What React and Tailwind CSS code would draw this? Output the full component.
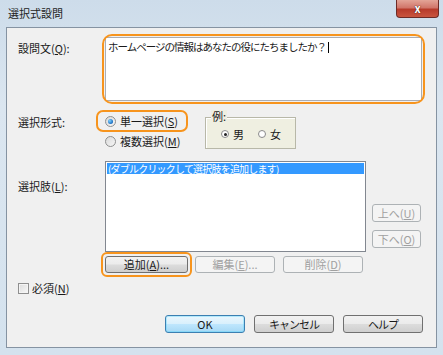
const FONT = "font-['Noto_Sans_CJK_JP','Liberation_Sans',sans-serif]"

const Btn = ({ children, className = '', variant = 'normal' }) => {
  const look = {
    normal: 'border-[#707070] bg-[linear-gradient(#f2f2f2_0%,#ebebeb_48%,#dcdcdc_52%,#cfcfcf_100%)] text-[#1a1a1a]',
    primary: 'border-[#3c7fb1] bg-[linear-gradient(#eaf6fd_0%,#d9f0fc_48%,#bee6fd_52%,#a7d9f5_100%)] text-[#1a1a1a] shadow-[inset_0_0_0_1px_#48d3fc55]',
    disabled: 'border-[#adb2b5] bg-[#f4f4f4] text-[#a0a0a0]',
  }[variant]
  return (
    <div
      className={`flex items-center justify-center rounded-[3px] border text-[11px] leading-none ${look} ${className}`}
    >
      {children}
    </div>
  )
}

const VistaRadio = ({ checked }) => (
  <span className="flex h-[11px] w-[11px] shrink-0 items-center justify-center rounded-full border border-[#8e8f8f] bg-[linear-gradient(135deg,#d9d9d9,#f6f6f6)]">
    {checked && (
      <span className="h-[5px] w-[5px] rounded-full bg-[radial-gradient(circle_at_35%_35%,#7fd3ff,#1b6dc1_70%)]" />
    )}
  </span>
)

const SmallRadio = ({ checked }) => (
  <span className="flex h-[8px] w-[8px] items-center justify-center rounded-full border border-[#8a8a8a] bg-white">
    {checked && <span className="h-[3px] w-[3px] rounded-full bg-[#222]" />}
  </span>
)

const Highlight = ({ className }) => (
  <div className={`pointer-events-none absolute border-2 border-[#f7941d] ${className}`} />
)

export default function App() {
  return (
    <div className={`flex h-[355px] w-[443px] flex-col overflow-hidden bg-[linear-gradient(180deg,#cddcea_0%,#dbe6f0_30%,#d4e2ee_100%)] ${FONT} text-[#1a1a1a]`}>
      {/* Title bar */}
      <div className="relative flex h-[27px] shrink-0 items-center pl-[8px]">
        <span className="text-[11px] leading-none text-[#222]">選択式設問</span>
        <div className="absolute right-[4px] top-0 flex h-[18px] w-[43px] items-center justify-center rounded-b-[4px] border border-t-0 border-[#6d2b26] bg-[linear-gradient(#e3a497_0%,#d1766a_45%,#b73b2b_55%,#c9553f_100%)]">
          <span className="text-[11px] font-bold leading-none text-white [text-shadow:0_0_1px_#4a1a14,0_0_1px_#4a1a14]">x</span>
        </div>
      </div>

      {/* Client area */}
      <div className="mx-[6px] mb-[7px] flex-1 border border-[#8593a2] bg-[#f0f0f0]">
        <div className="flex h-full flex-col text-[11px]">
          {/* Question text */}
          <div className="mt-[9px] flex">
            <div className="w-[98px] pl-[11px] pt-[3px]">
              設問文(<u>Q</u>):
            </div>
            <div className="relative">
              <div className="h-[64px] w-[317px] border border-[#abadb3] bg-white px-[2px] pt-[2px] text-[10.5px] leading-[13px] tracking-[-1px]">
                ホームページの情報はあなたの役にたちましたか？<span className="ml-[2px] inline-block h-[11px] w-px translate-y-[2px] bg-black" />
              </div>
              <Highlight className="-left-[3px] -top-[3px] h-[70px] w-[323px] rounded-[10px]" />
            </div>
          </div>

          {/* Selection type */}
          <div className="mt-[13px] flex">
            <div className="w-[98px] pl-[11px]">選択形式:</div>
            <div className="flex w-[100px] flex-col gap-[6px]">
              <div className="relative flex items-center gap-[4px] leading-[14px]">
                <VistaRadio checked />
                <span>
                  単一選択(<u>S</u>)
                </span>
                <Highlight className="-left-[9px] -top-[4px] h-[22px] w-[92px] rounded-[7px]" />
              </div>
              <div className="flex items-center gap-[4px] leading-[14px]">
                <VistaRadio />
                <span>
                  複数選択(<u>M</u>)
                </span>
              </div>
            </div>
            <div className="relative mt-[3px] h-[32px] w-[91px] border border-[#b8b8a8] bg-[#efefe1] shadow-[inset_1px_1px_0_#fff]">
              <span className="absolute -top-[8px] left-[5px] bg-[#efefe1] px-[1px] leading-[13px]">例:</span>
              <div className="flex h-full items-center gap-[14px] pl-[15px] pt-[2px]">
                <span className="flex items-center gap-[4px]">
                  <SmallRadio checked />男
                </span>
                <span className="flex items-center gap-[4px]">
                  <SmallRadio />女
                </span>
              </div>
            </div>
          </div>

          {/* Choices */}
          <div className="mt-[12px] flex">
            <div className="w-[98px] pl-[11px] pt-[17px]">
              選択肢(<u>L</u>):
            </div>
            <div className="h-[91px] w-[261px] border border-[#828790] bg-white p-px">
              <div className="h-[11px] bg-[#3399ff] pl-[1px] text-[10px] leading-[11px] tracking-[-0.8px] text-white">
                (ダブルクリックして選択肢を追加します)
              </div>
            </div>
            <div className="ml-[6px] mt-[43px] flex flex-col gap-[8px]">
              <Btn variant="disabled" className="h-[18px] w-[49px]">
                上へ(<u>U</u>)
              </Btn>
              <Btn variant="disabled" className="h-[18px] w-[49px]">
                下へ(<u>O</u>)
              </Btn>
            </div>
          </div>

          <div className="ml-[98px] mt-[4px] flex gap-[7px]">
            <div className="relative">
              <Btn className="h-[17px] w-[83px]">
                追加(<u>A</u>)...
              </Btn>
              <Highlight className="-left-[4px] -top-[4px] h-[25px] w-[91px] rounded-[6px]" />
            </div>
            <Btn variant="disabled" className="h-[17px] w-[80px]">
              編集(<u>E</u>)...
            </Btn>
            <Btn variant="disabled" className="ml-[1px] h-[17px] w-[80px]">
              削除(<u>D</u>)
            </Btn>
          </div>

          {/* Required */}
          <div className="ml-[11px] mt-[9px] flex items-center gap-[3px]">
            <span className="h-[11px] w-[11px] border border-[#8f8f8f] bg-[linear-gradient(135deg,#dcdcdc,#f8f8f8)] shadow-[inset_0_0_0_1px_#f4f4f4]" />
            <span className="leading-[13px]">
              必須(<u>N</u>)
            </span>
          </div>

          {/* Dialog buttons */}
          <div className="mt-[20px] flex justify-end gap-[9px] pr-[13px]">
            <Btn variant="primary" className="h-[18px] w-[80px]">
              OK
            </Btn>
            <Btn className="h-[18px] w-[80px] tracking-[-1px]">キャンセル</Btn>
            <Btn className="h-[18px] w-[80px] tracking-[-1px]">ヘルプ</Btn>
          </div>
        </div>
      </div>
    </div>
  )
}
